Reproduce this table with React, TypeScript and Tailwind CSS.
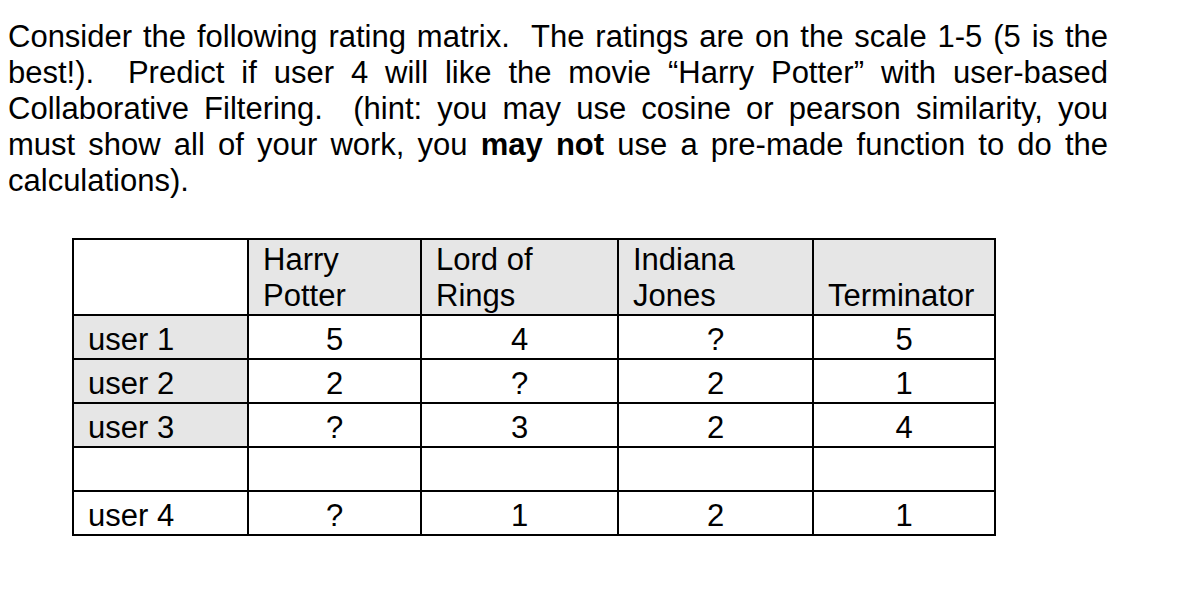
const lines = [
  'Consider the following rating matrix.\u00a0 The ratings are on the scale 1-5 (5 is the',
  'best!).\u00a0 Predict if user 4 will like the movie \u201cHarry Potter\u201d with user-based',
  'Collaborative Filtering.\u00a0 (hint: you may use cosine or pearson similarity, you',
]

const rows = [
  { user: 'user 1', shaded: true, values: ['5', '4', '?', '5'] },
  { user: 'user 2', shaded: true, values: ['2', '?', '2', '1'] },
  { user: 'user 3', shaded: true, values: ['?', '3', '2', '4'] },
  { user: '', shaded: false, values: ['', '', '', ''] },
  { user: 'user 4', shaded: false, values: ['?', '1', '2', '1'] },
]

export default function App() {
  return (
    <div className="min-h-[606px] w-[1188px] bg-white text-black font-['Liberation_Sans',Arial,sans-serif] text-[31px] leading-[36px]">
      <div className="pl-2 pt-[19px] w-[1108px]">
        {lines.map((line, i) => (
          <div key={i} className="whitespace-nowrap text-justify [text-align-last:justify]">
            {line}
          </div>
        ))}
        <div className="whitespace-nowrap text-justify [text-align-last:justify]">
          must show all of your work, you <b>may not</b> use a pre-made function to do the
        </div>
        <div>calculations).</div>
      </div>

      <table className="ml-[72px] mt-[39px] table-fixed border-collapse">
        <thead>
          <tr className="h-[74px]">
            <th className="w-[175px] border-2 border-black bg-white"></th>
            <th className="w-[173px] border-2 border-black bg-[#e6e6e6] pl-[14px] pt-[2px] text-left align-top font-normal">
              Harry
              <br />
              Potter
            </th>
            <th className="w-[197px] border-2 border-black bg-[#e6e6e6] pl-[14px] pt-[2px] text-left align-top font-normal">
              Lord of
              <br />
              Rings
            </th>
            <th className="w-[195px] border-2 border-black bg-[#e6e6e6] pl-[14px] pt-[2px] text-left align-top font-normal">
              Indiana
              <br />
              Jones
            </th>
            <th className="w-[182px] border-2 border-black bg-[#e6e6e6] pl-[14px] pt-[2px] text-left align-top font-normal">
              <br />
              Terminator
            </th>
          </tr>
        </thead>
        <tbody>
          {rows.map((row, i) => (
            <tr key={i} className="h-[44px]">
              <td className={`border-2 border-black pl-[14px] pt-[5px] align-middle ${row.shaded ? 'bg-[#e6e6e6]' : 'bg-white'}`}>
                {row.user}
              </td>
              {row.values.map((v, j) => (
                <td key={j} className="border-2 border-black pt-[5px] text-center align-middle">
                  {v}
                </td>
              ))}
            </tr>
          ))}
        </tbody>
      </table>
    </div>
  )
}
